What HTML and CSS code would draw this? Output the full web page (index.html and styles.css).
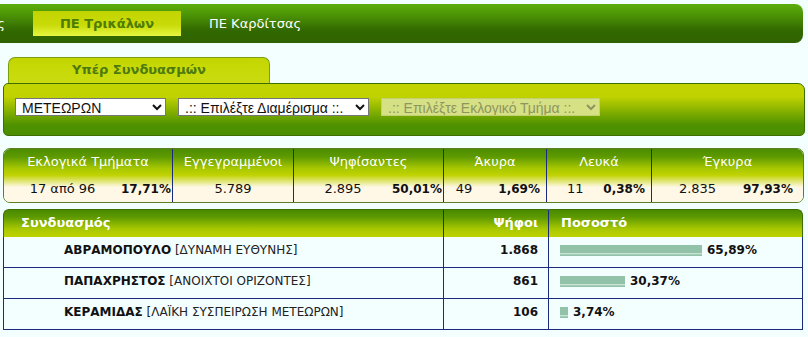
FILE: index.html
```html
<!DOCTYPE html>
<html lang="el">
<head>
<meta charset="utf-8">
<title>Αποτελέσματα</title>
<link rel="stylesheet" href="styles.css">
</head>
<body>
<div class="topbar">
  <a class="nav prev"><span>ΠΕ Λάρισας</span></a>
  <a class="nav active">ΠΕ Τρικάλων</a>
  <a class="nav">ΠΕ Καρδίτσας</a>
</div>

<div class="filter">
  <div class="ftab">Υπέρ Συνδυασμών</div>
  <div class="fpanel">
    <select class="sel s1"><option>ΜΕΤΕΩΡΩΝ</option></select>
    <select class="sel s2"><option>.:: Επιλέξτε Διαμέρισμα ::.</option></select>
    <select class="sel s3" disabled><option>.:: Επιλέξτε Εκλογικό Τμήμα ::.</option></select>
  </div>
</div>

<div class="stats">
  <div class="sh">Εκλογικά Τμήματα</div>
  <div class="sh div">Εγγεγραμμένοι</div>
  <div class="sh div">Ψηφίσαντες</div>
  <div class="sh div">Άκυρα</div>
  <div class="sh div">Λευκά</div>
  <div class="sh div">Έγκυρα</div>
  <div class="sd"><span class="v">17 από 96</span><b class="p">17,71%</b></div>
  <div class="sd div"><span class="v">5.789</span></div>
  <div class="sd div"><span class="v">2.895</span><b class="p">50,01%</b></div>
  <div class="sd div"><span class="v v4">49</span><b class="p p4">1,69%</b></div>
  <div class="sd div"><span class="v">11</span><b class="p p4">0,38%</b></div>
  <div class="sd div"><span class="v">2.835</span><b class="p p6">97,93%</b></div>
</div>

<div class="results">
  <div class="rh rname">Συνδυασμός</div>
  <div class="rh rvotes">Ψήφοι</div>
  <div class="rh rpct">Ποσοστό</div>

  <div class="rc cname"><b>ΑΒΡΑΜΟΠΟΥΛΟ</b> [ΔΥΝΑΜΗ ΕΥΘΥΝΗΣ]</div>
  <div class="rc cvotes">1.868</div>
  <div class="rc cpct"><span class="bar" style="width:142px"></span><b>65,89%</b></div>

  <div class="rc cname"><b>ΠΑΠΑΧΡΗΣΤΟΣ</b> [ΑΝΟΙΧΤΟΙ ΟΡΙΖΟΝΤΕΣ]</div>
  <div class="rc cvotes">861</div>
  <div class="rc cpct"><span class="bar" style="width:65px"></span><b>30,37%</b></div>

  <div class="rc cname"><b>ΚΕΡΑΜΙΔΑΣ</b> [ΛΑΪΚΗ ΣΥΣΠΕΙΡΩΣΗ ΜΕΤΕΩΡΩΝ]</div>
  <div class="rc cvotes">106</div>
  <div class="rc cpct"><span class="bar" style="width:8px"></span><b>3,74%</b></div>
</div>
</body>
</html>
```

FILE: styles.css
```css
html, body {
  margin: 0;
  padding: 0;
  background: #f3feff;
  font-family: "DejaVu Sans", Verdana, sans-serif;
  font-size: 13px;
  color: #111;
}

/* top navigation bar */
.topbar {
  margin: 4px 5px 0 0;
  height: 39px;
  display: flex;
  align-items: center;
  border-radius: 0 8px 8px 0;
  background: linear-gradient(#5cae0c 0%, #4c9406 28%, #326800 68%, #2e6200 100%);
  overflow: hidden;
}
.nav {
  color: #fff;
  font-size: 13px;
  white-space: nowrap;
  flex-shrink: 0;
}
.nav.prev {
  width: 5px;
  overflow: hidden;
  display: flex;
  justify-content: flex-end;
}
.nav.prev span { flex-shrink: 0; }
.nav.active {
  margin-left: 28px;
  width: 148px;
  height: 25px;
  line-height: 25px;
  text-align: center;
  font-weight: bold;
  color: #4d7c00;
  background: linear-gradient(#c2d400 0%, #c8da08 55%, #e6f640 100%);
}
.nav.active + .nav {
  margin-left: 28px;
}

/* filter section */
.filter {
  margin: 14px 3px 0 3px;
}
.ftab {
  margin-left: 5px;
  width: 260px;
  height: 25px;
  line-height: 24px;
  text-align: center;
  font-weight: bold;
  color: #4d7a10;
  border: 1px solid #7aa010;
  border-bottom: none;
  border-radius: 7px 7px 0 0;
  background: linear-gradient(#c4d600, #cadc10);
}
.fpanel {
  height: 53px;
  box-sizing: border-box;
  padding: 14px 0 0 11px;
  display: flex;
  align-items: flex-start;
  gap: 12px;
  border: 1px solid #3e6e00;
  border-radius: 5px 7px 5px 5px;
  background: linear-gradient(#c2d400 0%, #c0d200 25%, #8cb400 50%, #4f9200 80%, #4a8e00 100%);
}
.sel {
  height: 18px;
  font-family: "Liberation Sans", Arial, sans-serif;
  font-size: 14px;
  color: #111;
  background: #fff;
  border: 1px solid #767676;
  border-radius: 0;
  padding: 0 0 0 2px;
}
.s1 { width: 151px; }
.s2 { width: 191px; }
.s3 {
  width: 219px;
  color: #8f9560;
  background: #d6e084;
  border-color: #c4d070;
  opacity: 1;
}

/* stats table */
.stats {
  margin: 12px 4px 0 3px;
  display: grid;
  grid-template-columns: 168px 121px 150px 103px 105px 1fr;
  border: 1px solid #5e7e24;
  border-radius: 7px;
  overflow: hidden;
}
.sh {
  height: 26px;
  line-height: 26px;
  text-align: center;
  color: #fff;
  background: linear-gradient(#4c8c00 0%, #5e9a00 30%, #a8c800 75%, #c0d200 100%);
}
.sd {
  height: 27px;
  display: flex;
  align-items: center;
  background: linear-gradient(#c0d200 0%, #fff8e6 45%, #fff8e8 100%);
}
.div { border-left: 1px solid #1b2a7c; }
.sd .v {
  flex: 1;
  text-align: center;
}
.sd .p {
  font-size: 12px;
  font-weight: bold;
  padding-right: 1px;
}
.sd .p4 { padding-right: 6px; }
.sd .p6 { padding-right: 10px; }
.sd .v4 { flex: none; width: 40px; }
.sd .v4 + .p4 { margin-left: auto; }

/* results table */
.results {
  margin: 6px 5px 0 3px;
  display: grid;
  grid-template-columns: 440px 105px 1fr;
}
.rh {
  height: 27px;
  line-height: 26px;
  font-weight: bold;
  color: #fff;
  background: linear-gradient(#4a8a00 0%, #5c9800 25%, #a8c800 70%, #c0d200 100%);
  border-top: 1px solid #3e6e00;
}
.rname {
  padding-left: 17px;
  border-left: 1px solid #3e6e00;
  border-radius: 6px 0 0 0;
}
.rvotes {
  text-align: right;
  padding-right: 10px;
  border-left: 1px solid #1b2a7c;
}
.rpct {
  padding-left: 12px;
  border-left: 1px solid #1b2a7c;
  border-right: 1px solid #3e6e00;
  border-radius: 0 6px 0 0;
}
.rc {
  height: 26px;
  padding-bottom: 4px;
  display: flex;
  align-items: center;
  border-bottom: 1px solid #1b2a7c;
  color: #222;
  font-size: 12px;
}
.cname {
  padding-left: 60px;
  border-left: 1px solid #1b2a7c;
  white-space: pre;
}
.cname b { color: #111; }
.cvotes {
  justify-content: flex-end;
  padding-right: 10px;
  font-weight: bold;
  color: #111;
  border-left: 1px solid #1b2a7c;
}
.cpct {
  padding-left: 11px;
  gap: 5px;
  border-left: 1px solid #1b2a7c;
  border-right: 1px solid #1b2a7c;
}
.cpct b { color: #111; }
.bar {
  display: block;
  height: 11px;
  background: linear-gradient(#92c3a8 0%, #92c3a8 70%, #c9e2d4 72%, #c9e2d4 85%, #92c3a8 87%);
}
```
